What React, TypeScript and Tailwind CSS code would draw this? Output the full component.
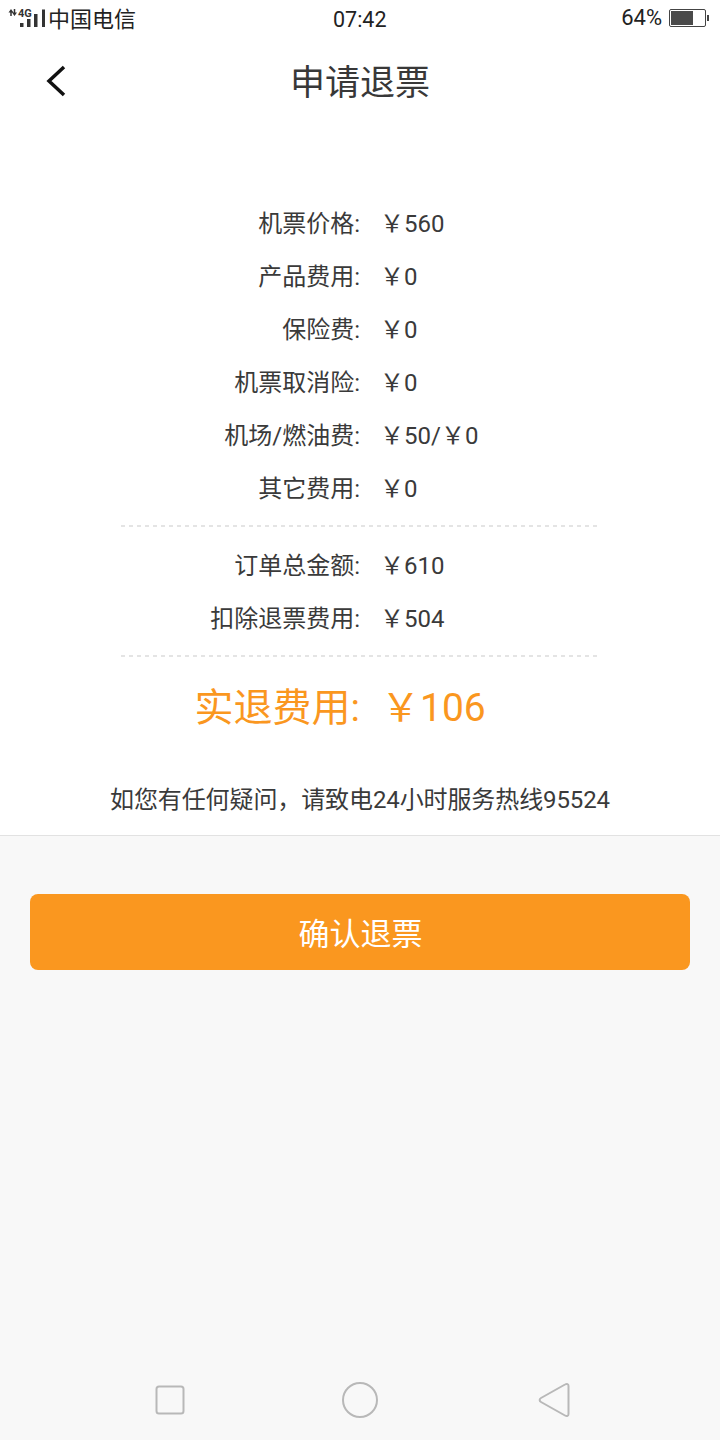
import React from 'react';

const font = "font-['Roboto','Noto_Sans_CJK_SC',sans-serif]";

const topRows = [
  ['机票价格:', '￥560'],
  ['产品费用:', '￥0'],
  ['保险费:', '￥0'],
  ['机票取消险:', '￥0'],
  ['机场/燃油费:', '￥50/￥0'],
  ['其它费用:', '￥0'],
];

const midRows = [
  ['订单总金额:', '￥610'],
  ['扣除退票费用:', '￥504'],
];

function Row({ label, value }: { label: string; value: string }) {
  return (
    <div className="h-[53px] flex items-center text-[24px] text-[#3a3a3a]">
      <span className="w-[360px] text-right">{label}</span>
      <span className="ml-[20px]">{value}</span>
    </div>
  );
}

function Divider() {
  return <div className="ml-[121px] w-[476px] h-[2px] bg-[repeating-linear-gradient(90deg,#e4e4e4_0_4px,transparent_4px_8px)]" />;
}

function StatusBar() {
  return (
    <div className="h-[38px] flex items-center justify-between relative text-black">
      <div className="flex items-center pl-[8px]">
        <svg width="40" height="24" viewBox="0 -2 40 24">
          <text x="10" y="7.500" fontSize="11" fontWeight="700" fontFamily="Roboto, sans-serif" fill="#333">4G</text>
          <path d="M3 7V2M6.500 0v5" stroke="#333" strokeWidth="1.500" fill="none" />
          <path d="M3 0L0.500 3.500h5zM6.500 7L4 3.500h5z" fill="#333" />
          <rect x="12" y="14" width="3.500" height="4" fill="#333" />
          <rect x="19" y="10" width="3.500" height="8" fill="#333" />
          <rect x="26" y="5" width="3.500" height="13" fill="#333" />
          <rect x="34" y="0.500" width="3" height="17.500" fill="#333" />
        </svg>
        <span className="text-[22px] text-[#222222]">中国电信</span>
      </div>
      <span className="absolute left-[333px] top-[6px] text-[21.500px] leading-[28px] text-[#222222]">07:42</span>
      <div className="flex items-center pr-[11px] mt-[-3px]">
        <span className="text-[22px] text-[#222222]">64%</span>
        <div className="ml-[7px] w-[37px] h-[18px] border border-[#444444] rounded-[2px] p-[1px]">
          <div className="w-[22px] h-full bg-[#4a4a4a]" />
        </div>
        <div className="ml-[1px] w-[2px] h-[6px] bg-[#444444]" />
      </div>
    </div>
  );
}

export default function App() {
  return (
    <div className={`w-[720px] h-[1440px] flex flex-col bg-[#f8f8f8] ${font}`}>
      <div className="bg-white border-b border-[#e2e2e2] h-[836px] flex flex-col">
        <StatusBar />
        {/* Header */}
        <div className="h-[88px] relative flex items-center justify-center">
          <svg width="24" height="34" viewBox="0 0 24 34" className="absolute left-[45px] top-[26px]">
            <path d="M19 3L4 17l15 14" stroke="#111" strokeWidth="3.500" fill="none" />
          </svg>
          <span className="text-[35px] text-[#383838] mt-[5px]">申请退票</span>
        </div>

        <div className="pt-[71px]">
          {topRows.map(([l, v]) => (
            <Row key={l} label={l} value={v} />
          ))}
        </div>
        <div className="mt-[10px]"><Divider /></div>
        <div className="mt-[12px]">
          {midRows.map(([l, v]) => (
            <Row key={l} label={l} value={v} />
          ))}
        </div>
        <div className="mt-[10px]"><Divider /></div>

        <div className="h-[102px] flex items-center text-[#fa971f] text-[39px]">
          <span className="w-[360px] text-right">实退费用:</span>
          <span className="ml-[21px]">￥106</span>
        </div>
        <div className="mt-[23px] text-center text-[24px] text-[#3a3a3a] tracking-[-0.100px]">如您有任何疑问，请致电24小时服务热线95524</div>
      </div>

      <div className="flex-1 flex flex-col">
        <div className="mt-[58px] mx-[30px] h-[76px] rounded-[8px] bg-[#fa971f] flex items-center justify-center text-white text-[31px]">
          <span className="mt-[6px] ml-[1px]">确认退票</span>
        </div>
        {/* Nav bar */}
        <div className="mt-auto h-[80px] relative">
          <svg width="720" height="80" viewBox="0 0 720 80" className="absolute left-0 top-0">
            <rect x="156.500" y="26.500" width="27" height="27" rx="2.500" fill="none" stroke="#b8b8b8" strokeWidth="2" />
            <circle cx="360" cy="40" r="17" fill="none" stroke="#b8b8b8" strokeWidth="2" />
            <path d="M565 24.500c2-1.200 3.500-.5 3.500 1.500v28c0 2-1.500 2.700-3.500 1.500l-24-13.500c-1.800-1-1.800-3 0-4z" fill="none" stroke="#b8b8b8" strokeWidth="2" />
          </svg>
        </div>
      </div>
    </div>
  );
}
